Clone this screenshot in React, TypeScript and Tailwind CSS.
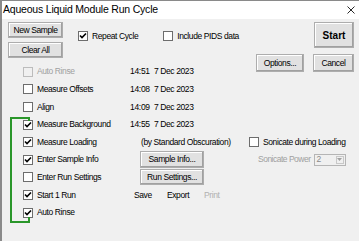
import React from "react";

const font = "font-['Tahoma','Liberation_Sans',Arial,sans-serif]";

function Check({ checked, disabled }: { checked?: boolean; disabled?: boolean }) {
  return (
    <span
      className={`flex h-[10px] w-[10px] shrink-0 items-center justify-center border ${
        disabled ? "border-[#bcbcbc] bg-[#f0f0f0]" : "border-[#6d6d6d] bg-white"
      }`}
    >
      {checked && (
        <svg width="8" height="8" viewBox="0 0 8 8">
          <path d="M1 3.5 L3 5.5 L7 1.5" fill="none" stroke="#000" strokeWidth="1.6" />
        </svg>
      )}
    </span>
  );
}

function Btn({ children, className = "" }: { children: React.ReactNode; className?: string }) {
  return (
    <div
      className={`flex shrink-0 items-center justify-center border border-[#adadad] bg-[#e1e1e1] text-black shadow-[inset_-1px_-1px_0_#a0a0a0,inset_1px_1px_0_#fff] ${className}`}
    >
      {children}
    </div>
  );
}

function Stamp({ time }: { time: string }) {
  return (
    <>
      <span className="w-[24px] tracking-[-0.3px]">{time}</span>
      <span className="tracking-[-0.4px]">7 Dec 2023</span>
    </>
  );
}

const rows: { label: string; checked?: boolean; disabled?: boolean; time: string }[] = [
  { label: "Auto Rinse", disabled: true, time: "14:51" },
  { label: "Measure Offsets", time: "14:08" },
  { label: "Align", time: "14:09" },
];

export default function App() {
  return (
    <div className={`h-[241px] w-[359px] overflow-hidden border-l-2 border-t border-[#8a8a8a] bg-[#f0f0f0] text-[8.5px] tracking-[-0.4px] ${font}`}>
      {/* title bar */}
      <div className="flex h-[18px] items-center justify-between bg-white pl-[1px] pr-[4px]">
        <span className="text-[10.5px] tracking-[-0.2px] text-black">Aqueous Liquid Module Run Cycle</span>
        <svg width="8" height="8" viewBox="0 0 8 8">
          <path d="M0.5 0.5 L7.5 7.5 M7.5 0.5 L0.5 7.5" stroke="#111" strokeWidth="0.9" />
        </svg>
      </div>

      {/* top section */}
      <div className="flex h-[44px] justify-between pl-[6px] pr-[5px] pt-[3px]">
        <div className="flex">
          <div className="flex flex-col gap-[4px]">
            <Btn className="h-[16px] w-[55px]">New Sample</Btn>
            <Btn className="h-[16px] w-[55px]">Clear All</Btn>
          </div>
          <div className="ml-[15px] mt-[9px] flex items-start gap-[3px]">
            <Check checked />
            <span className="ml-[1px] leading-[10px]">Repeat Cycle</span>
            <span className="ml-[22px]">
              <Check />
            </span>
            <span className="ml-[1px] leading-[10px]">Include PIDS data</span>
          </div>
        </div>
        <div className="flex flex-col items-end gap-[6px]">
          <Btn className="h-[26px] w-[40px] border-[#333] text-[10px] font-bold tracking-normal">Start</Btn>
          <div className="flex gap-[9px]">
            <Btn className="h-[18px] w-[48px]">Options...</Btn>
            <Btn className="h-[18px] w-[41px]">Cancel</Btn>
          </div>
        </div>
      </div>

      {/* step list */}
      <div className="pl-[21px]">
        {rows.map((r) => (
          <div key={r.label} className="flex h-[17.6px] items-center">
            <Check checked={r.checked} disabled={r.disabled} />
            <span className={`ml-[4px] w-[93px] ${r.disabled ? "text-[#a0a0a0]" : "text-black"}`}>{r.label}</span>
            <Stamp time={r.time} />
          </div>
        ))}

        <div className="relative">
          <span className="absolute left-[-13px] top-[1px] h-[106px] w-[2px] bg-[#2a962a]" />
          <span className="absolute left-[-13px] top-[1px] h-[2px] w-[20px] bg-[#2a962a]" />
          <span className="absolute left-[5px] top-[1px] h-[4px] w-[2px] bg-[#2a962a]" />
          <span className="absolute left-[-13px] top-[105px] h-[2px] w-[20px] bg-[#2a962a]" />
          <span className="absolute left-[5px] top-[101px] h-[4px] w-[2px] bg-[#2a962a]" />

          <div className="flex h-[17.6px] items-center">
            <Check checked />
            <span className="ml-[4px] w-[93px]">Measure Background</span>
            <Stamp time="14:55" />
          </div>
          <div className="flex h-[17.6px] items-center">
            <Check checked />
            <span className="ml-[4px] w-[104px]">Measure Loading</span>
            <span className="w-[108px]">(by Standard Obscuration)</span>
            <Check />
            <span className="ml-[4px]">Sonicate during Loading</span>
          </div>
          <div className="flex h-[17.6px] items-center">
            <Check checked />
            <span className="ml-[4px] w-[103px]">Enter Sample Info</span>
            <Btn className="h-[17px] w-[64px]">Sample Info...</Btn>
            <span className="ml-[54px] tracking-[-0.5px] text-[#a0a0a0]">Sonicate Power</span>
            <div className="ml-[3px] flex h-[12px] w-[32px] items-center border border-[#b5b5b5] bg-[#f0f0f0]">
              <span className="pl-[2px] text-[#8a8a8a]">2</span>
              <span className="ml-auto mr-[1px] flex h-[8px] w-[8px] items-center justify-center border border-[#c8c8c8]">
                <svg width="5" height="3" viewBox="0 0 5 3">
                  <path d="M0 0 L5 0 L2.5 3 Z" fill="#a0a0a0" />
                </svg>
              </span>
            </div>
          </div>
          <div className="flex h-[17.6px] items-center">
            <Check />
            <span className="ml-[4px] w-[103px]">Enter Run Settings</span>
            <Btn className="h-[16px] w-[64px]">Run Settings...</Btn>
          </div>
          <div className="flex h-[17.6px] items-center">
            <Check checked />
            <span className="ml-[4px] w-[97px]">Start 1 Run</span>
            <span className="w-[33px]">Save</span>
            <span className="w-[37px]">Export</span>
            <span className="text-[#b0b0b0]">Print</span>
          </div>
          <div className="flex h-[17.6px] items-center">
            <Check checked />
            <span className="ml-[4px]">Auto Rinse</span>
          </div>
        </div>
      </div>
    </div>
  );
}
